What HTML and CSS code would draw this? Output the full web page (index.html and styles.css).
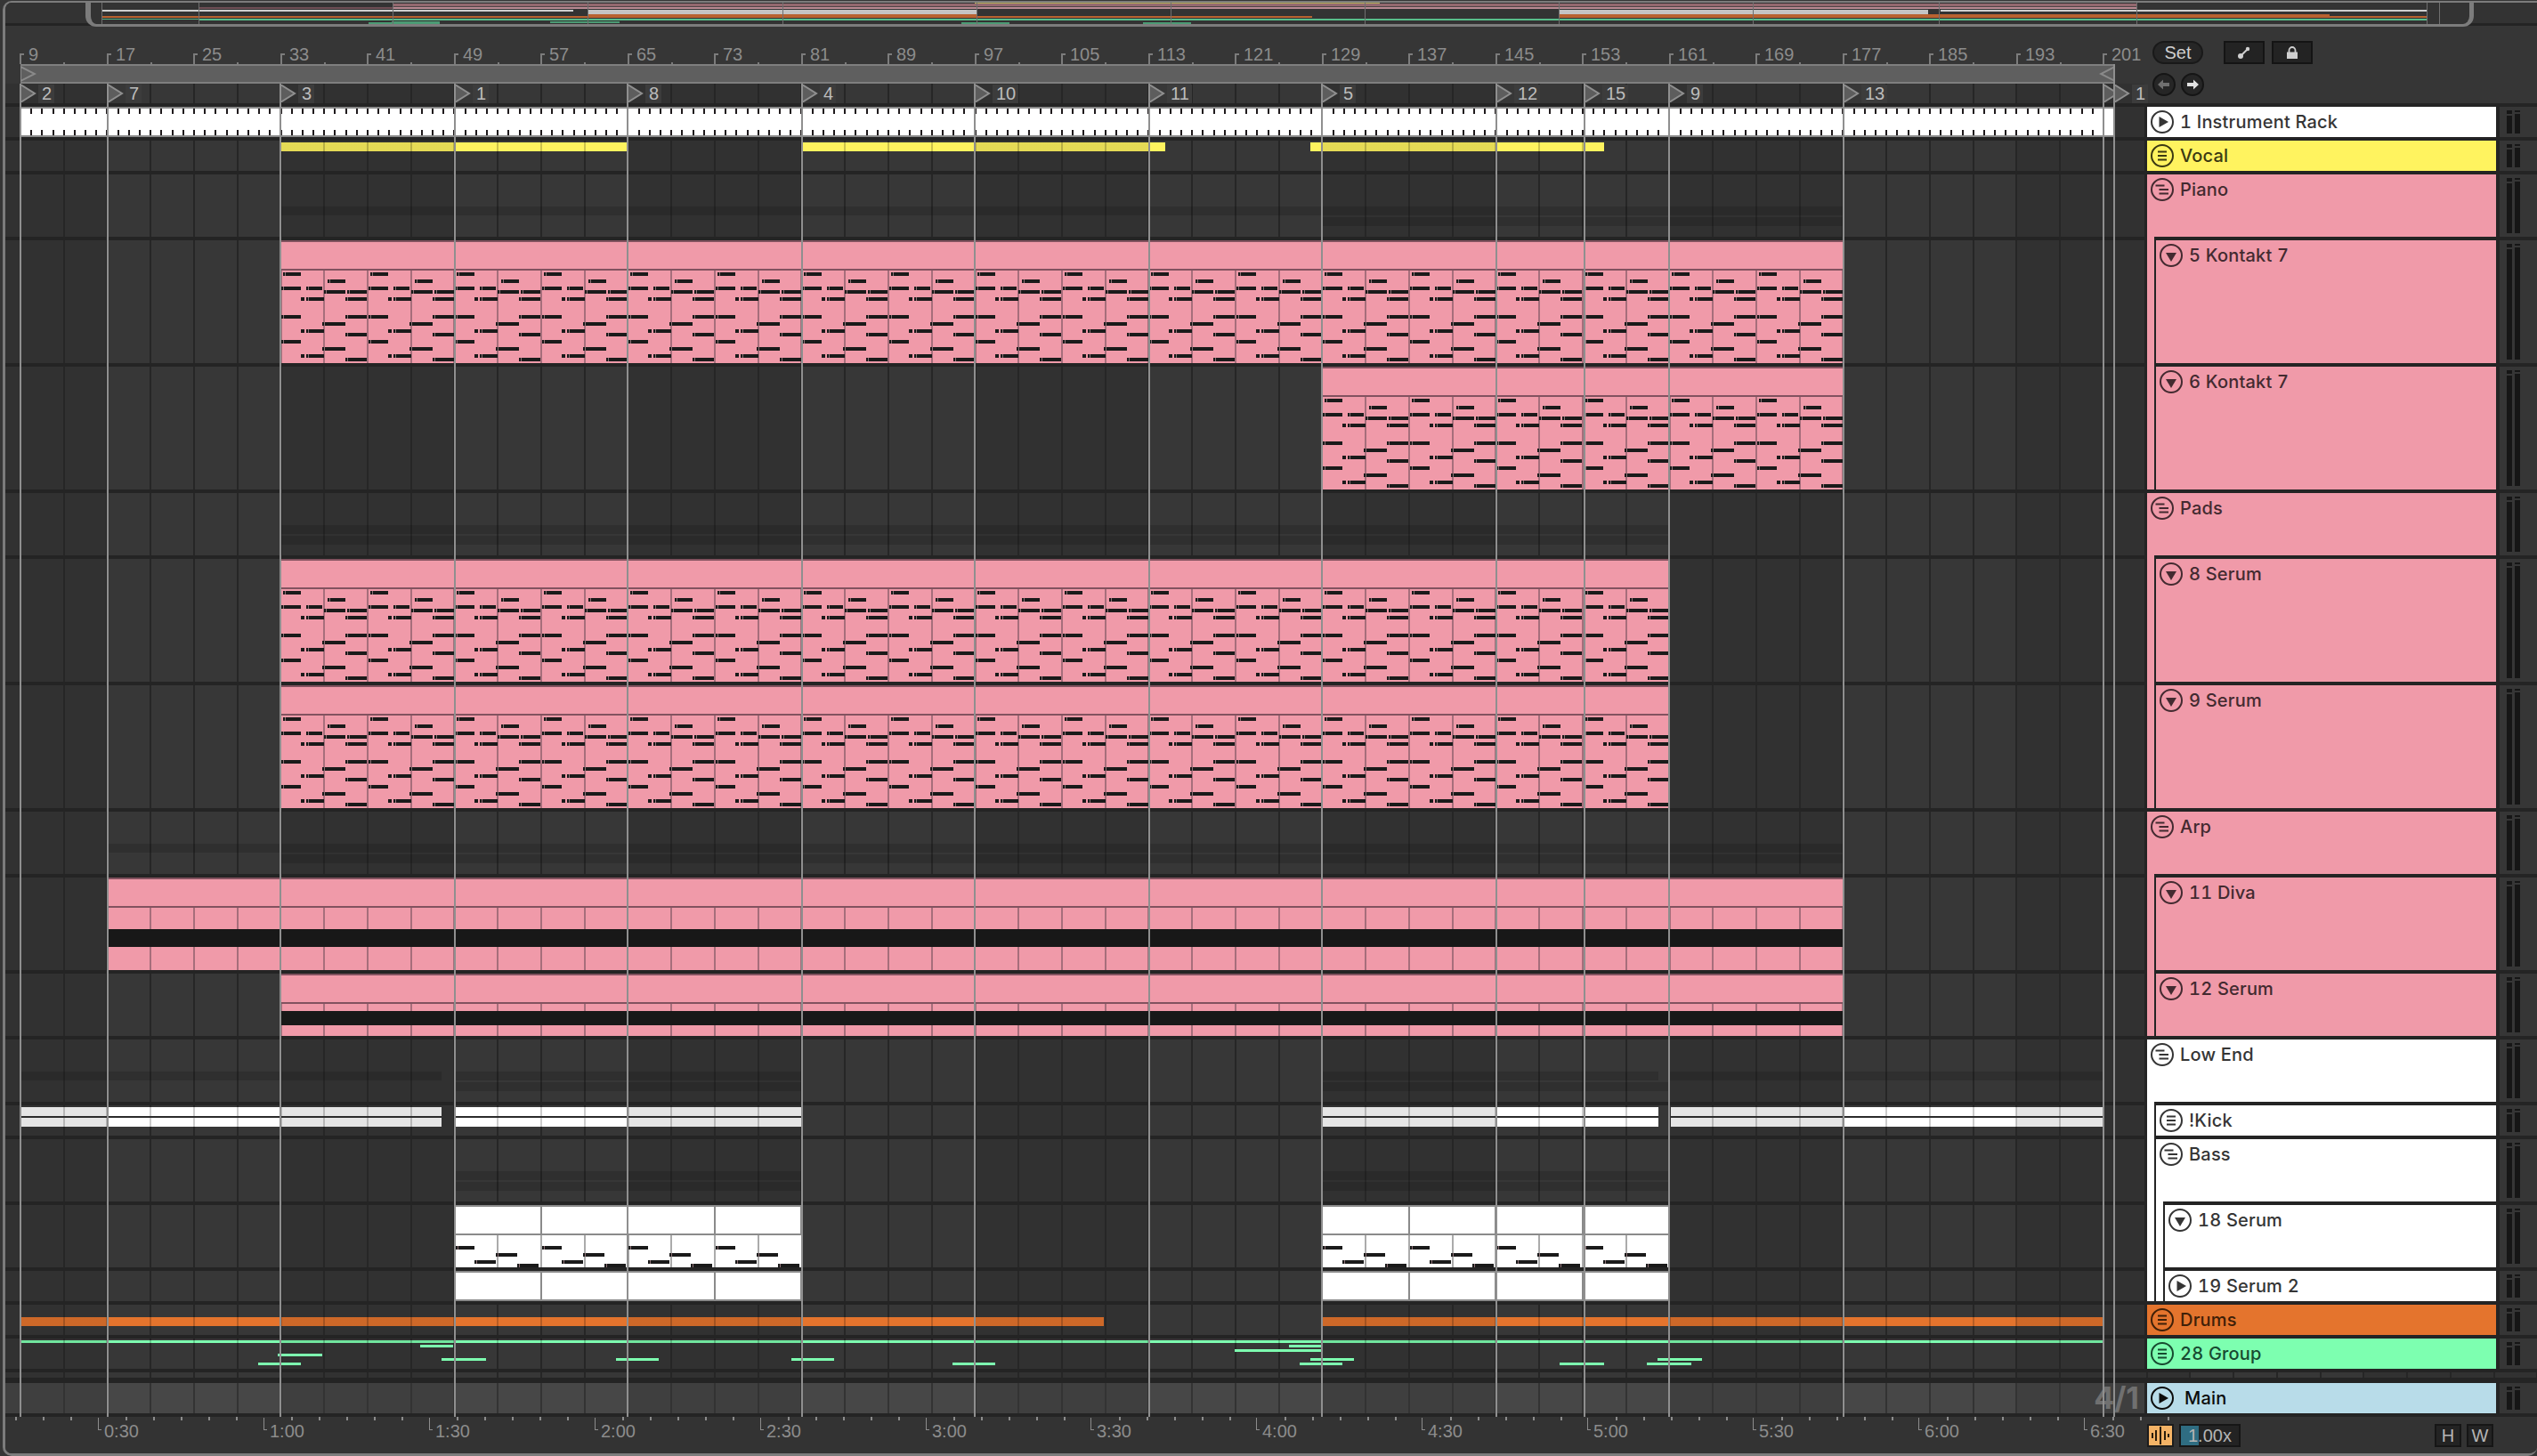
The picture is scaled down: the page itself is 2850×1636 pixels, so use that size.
FILE: index.html
```html
<!DOCTYPE html>
<html lang="en">
<head>
<meta charset="utf-8">
<title>Arrangement</title>
<link rel="stylesheet" href="styles.css">
</head>
<body>
<svg class="defs" width="0" height="0">
  <symbol id="play" viewBox="0 0 26 26"><circle cx="13" cy="13" r="12" fill="none" stroke="currentColor" stroke-width="2"/><polygon points="9.5,7 9.5,19 20,13" fill="currentColor"/></symbol>
  <symbol id="down" viewBox="0 0 26 26"><circle cx="13" cy="13" r="12" fill="none" stroke="currentColor" stroke-width="2"/><polygon points="7,10 19,10 13,20" fill="currentColor"/></symbol>
  <symbol id="lines" viewBox="0 0 26 26"><circle cx="13" cy="13" r="12" fill="none" stroke="currentColor" stroke-width="2"/><path d="M8 8.5h10M8 13h10M8 17.500h10" stroke="currentColor" stroke-width="2" fill="none"/></symbol>
  <symbol id="group" viewBox="0 0 26 26"><circle cx="13" cy="13" r="12" fill="none" stroke="currentColor" stroke-width="2"/><path d="M5.500 8.500h10M9.500 13h10.500M9.500 17.500h10.500" stroke="currentColor" stroke-width="2" fill="none"/></symbol>
</svg>

<div class="app">
  <div class="overview">
    <div class="ov-frame">
      <svg class="ov-map" id="ovmap" width="2671" height="24" viewBox="102 3 2671 24" shape-rendering="crispEdges">
        <rect x="223" y="8" width="218" height="2" fill="#6e4f55"/>
        <rect x="441" y="4" width="1959" height="3" fill="#94696f"/>
        <rect x="441" y="7" width="1959" height="1" fill="#4d4446"/>
        <rect x="441" y="8" width="1959" height="2" fill="#b98a93"/>
        <rect x="1095" y="3" width="455" height="1" fill="#b3ac57"/>
        <rect x="114" y="11" width="530" height="2" fill="#cfcfcf"/>
        <rect x="660" y="11" width="437" height="5" fill="#c4c4c4"/>
        <rect x="1751" y="11" width="415" height="5" fill="#c4c4c4"/>
        <rect x="2180" y="11" width="546" height="2" fill="#cfcfcf"/>
        <rect x="114" y="18" width="1360" height="2" fill="#b86230"/>
        <rect x="660" y="16" width="437" height="4" fill="#b86230"/>
        <rect x="1751" y="16" width="866" height="4" fill="#b86230"/>
        <rect x="2617" y="18" width="109" height="2" fill="#b86230"/>
        <rect x="114" y="21" width="109" height="1" fill="#56b084"/>
        <rect x="223" y="21" width="2503" height="2" fill="#58bd8a"/>
        <rect x="414" y="25" width="54" height="2" fill="#4b9b74"/>
        <rect x="440" y="24" width="54" height="3" fill="#4b9b74"/>
        <rect x="618" y="24" width="78" height="2" fill="#4b9b74"/>
        <rect x="1080" y="25" width="54" height="2" fill="#4b9b74"/>
        <rect x="1284" y="25" width="54" height="2" fill="#4b9b74"/>
      </svg>
    </div>
  </div>

  <div class="arr">
    <div class="top">
      <div class="top-lane">
        <div class="ruler" id="ruler"></div>
        <div class="scrub">
          <svg class="flag flag-l" width="18" height="18" viewBox="0 0 18 18"><polygon points="0,1 16,9 0,17" fill="#5f5f5f" stroke="#8a8a8a" stroke-width="2"/></svg>
          <svg class="flag flag-r" width="18" height="18" viewBox="0 0 18 18"><polygon points="18,1 2,9 18,17" fill="#5f5f5f" stroke="#8a8a8a" stroke-width="2"/></svg>
        </div>
        <div class="locs lanebg" id="locs"></div>
      </div>
      <div class="ctrl">
        <div class="ctrl-row">
          <button class="pill">Set</button>
          <button class="sq sq1"><svg width="16" height="16" viewBox="0 0 16 16"><path d="M4 12L12 4" stroke="#cfcfcf" stroke-width="2"/><circle cx="4" cy="12" r="3" fill="#cfcfcf"/><circle cx="12" cy="4" r="2.200" fill="#cfcfcf"/></svg></button>
          <button class="sq"><svg width="16" height="16" viewBox="0 0 16 16"><path d="M4.500 8V5.500a3.500 3.500 0 0 1 7 0V8" fill="none" stroke="#cfcfcf" stroke-width="1.800"/><rect x="2" y="7.500" width="12" height="7.500" fill="#cfcfcf"/></svg></button>
        </div>
        <div class="ctrl-row ctrl-nav">
          <button class="nav"><svg width="16" height="14" viewBox="0 0 16 14"><path d="M1 7L7 1.500V5H14V9H7V12.500Z" fill="#6f6f6f"/></svg></button>
          <button class="nav"><svg width="16" height="14" viewBox="0 0 16 14"><path d="M15 7L9 1.500V5H2V9H9V12.500Z" fill="#e2e2e2"/></svg></button>
        </div>
      </div>
    </div>

    <div class="rows">
      <div class="row h34 white">
        <div class="lane"><div class="clip rack" style="--x:18px;--w:2351px"></div></div>
        <div class="head"><div class="body"><svg class="ico"><use href="#play"/></svg><span class="name">1 Instrument Rack</span></div></div>
        <div class="act"><div class="meter"><i></i><i></i></div></div>
      </div>
      <div class="row h34 yellow">
        <div class="lane">
          <div class="clip thin t-vocal" style="--x:310px;--w:389px"></div>
          <div class="clip thin t-vocal" style="--x:896px;--w:407px"></div>
          <div class="clip thin t-vocal" style="--x:1466px;--w:330px"></div>
        </div>
        <div class="head"><div class="body"><svg class="ico"><use href="#lines"/></svg><span class="name">Vocal</span></div></div>
        <div class="act"><div class="meter"><i></i><i></i></div></div>
      </div>
      <div class="row h70 pink">
        <div class="lane">
          <div class="ghost" style="--x:309px;--w:1755px"></div>
          <div class="ghost g2" style="--x:1479px;--w:585px"></div>
        </div>
        <div class="head"><div class="body"><svg class="ico"><use href="#group"/></svg><span class="name">Piano</span></div></div>
        <div class="act"><div class="meter"><i></i><i></i></div></div>
      </div>
      <div class="row h138 pink">
        <div class="lane">
          <div class="clip midi" style="--x:310px;--w:1754px"><div class="t"></div><div class="b" data-notes="a"></div></div>
        </div>
        <div class="head"><div class="strip pink"></div><div class="body"><svg class="ico"><use href="#down"/></svg><span class="name">5 Kontakt 7</span></div></div>
        <div class="act"><div class="meter"><i></i><i></i></div></div>
      </div>
      <div class="row h138 pink">
        <div class="lane">
          <div class="clip midi" style="--x:1480px;--w:584px"><div class="t"></div><div class="b" data-notes="a"></div></div>
        </div>
        <div class="head"><div class="strip pink"></div><div class="body"><svg class="ico"><use href="#down"/></svg><span class="name">6 Kontakt 7</span></div></div>
        <div class="act"><div class="meter"><i></i><i></i></div></div>
      </div>
      <div class="row h70 pink">
        <div class="lane">
          <div class="ghost" style="--x:309px;--w:1560px"></div>
          <div class="ghost g2" style="--x:309px;--w:1560px"></div>
        </div>
        <div class="head"><div class="body"><svg class="ico"><use href="#group"/></svg><span class="name">Pads</span></div></div>
        <div class="act"><div class="meter"><i></i><i></i></div></div>
      </div>
      <div class="row h138 pink">
        <div class="lane">
          <div class="clip midi" style="--x:310px;--w:1559px"><div class="t"></div><div class="b" data-notes="a"></div></div>
        </div>
        <div class="head"><div class="strip pink"></div><div class="body"><svg class="ico"><use href="#down"/></svg><span class="name">8 Serum</span></div></div>
        <div class="act"><div class="meter"><i></i><i></i></div></div>
      </div>
      <div class="row h138 pink">
        <div class="lane">
          <div class="clip midi" style="--x:310px;--w:1559px"><div class="t"></div><div class="b" data-notes="a"></div></div>
        </div>
        <div class="head"><div class="strip pink"></div><div class="body"><svg class="ico"><use href="#down"/></svg><span class="name">9 Serum</span></div></div>
        <div class="act"><div class="meter"><i></i><i></i></div></div>
      </div>
      <div class="row h70 pink">
        <div class="lane">
          <div class="ghost" style="--x:115px;--w:1949px"></div>
          <div class="ghost g2" style="--x:309px;--w:1755px"></div>
        </div>
        <div class="head"><div class="body"><svg class="ico"><use href="#group"/></svg><span class="name">Arp</span></div></div>
        <div class="act"><div class="meter"><i></i><i></i></div></div>
      </div>
      <div class="row h104 pink">
        <div class="lane">
          <div class="clip midi" style="--x:116px;--w:1948px"><div class="t"></div><div class="b"><div class="sus sus-a"></div></div></div>
        </div>
        <div class="head"><div class="strip pink"></div><div class="body"><svg class="ico"><use href="#down"/></svg><span class="name">11 Diva</span></div></div>
        <div class="act"><div class="meter"><i></i><i></i></div></div>
      </div>
      <div class="row h70 pink">
        <div class="lane">
          <div class="clip midi" style="--x:310px;--w:1754px"><div class="t"></div><div class="b"><div class="sus sus-b"></div></div></div>
        </div>
        <div class="head"><div class="strip pink"></div><div class="body"><svg class="ico"><use href="#down"/></svg><span class="name">12 Serum</span></div></div>
        <div class="act"><div class="meter"><i></i><i></i></div></div>
      </div>
      <div class="row h70 white">
        <div class="lane">
          <div class="ghost" style="--x:17px;--w:473px"></div>
          <div class="ghost" style="--x:505px;--w:390px"></div>
          <div class="ghost" style="--x:1479px;--w:378px"></div>
          <div class="ghost" style="--x:1870px;--w:486px"></div>
          <div class="ghost g2" style="--x:505px;--w:390px"></div>
          <div class="ghost g2" style="--x:1479px;--w:390px"></div>
        </div>
        <div class="head"><div class="body"><svg class="ico"><use href="#group"/></svg><span class="name">Low End</span></div></div>
        <div class="act"><div class="meter"><i></i><i></i></div></div>
      </div>
      <div class="row h34 white">
        <div class="lane">
          <div class="clip thin t-kick" style="--x:18px;--w:472px"></div>
          <div class="clip thin t-kick" style="--x:506px;--w:389px"></div>
          <div class="clip thin t-kick" style="--x:1480px;--w:377px"></div>
          <div class="clip thin t-kick" style="--x:1871px;--w:485px"></div>
        </div>
        <div class="head"><div class="strip white"></div><div class="body"><svg class="ico"><use href="#lines"/></svg><span class="name">!Kick</span></div></div>
        <div class="act"><div class="meter"><i></i><i></i></div></div>
      </div>
      <div class="row h70 white">
        <div class="lane">
          <div class="ghost" style="--x:505px;--w:390px"></div>
          <div class="ghost g2" style="--x:505px;--w:390px"></div>
          <div class="ghost" style="--x:1479px;--w:390px"></div>
          <div class="ghost g2" style="--x:1479px;--w:390px"></div>
        </div>
        <div class="head"><div class="strip white"></div><div class="body"><svg class="ico"><use href="#group"/></svg><span class="name">Bass</span></div></div>
        <div class="act"><div class="meter"><i></i><i></i></div></div>
      </div>
      <div class="row h70 white">
        <div class="lane">
          <div class="clip midi wclip" style="--x:506px;--w:389px"><div class="t"></div><div class="b" data-notes="b"></div></div>
          <div class="clip midi wclip" style="--x:1480px;--w:389px"><div class="t"></div><div class="b" data-notes="b"></div></div>
        </div>
        <div class="head"><div class="strip white"></div><div class="strip white"></div><div class="body"><svg class="ico"><use href="#down"/></svg><span class="name">18 Serum</span></div></div>
        <div class="act"><div class="meter"><i></i><i></i></div></div>
      </div>
      <div class="row h34 white">
        <div class="lane">
          <div class="clip midi wclip short" style="--x:506px;--w:389px"><div class="t"></div></div>
          <div class="clip midi wclip short" style="--x:1480px;--w:389px"><div class="t"></div></div>
        </div>
        <div class="head"><div class="strip white"></div><div class="strip white"></div><div class="body"><svg class="ico"><use href="#play"/></svg><span class="name">19 Serum 2</span></div></div>
        <div class="act"><div class="meter"><i></i><i></i></div></div>
      </div>
      <div class="row h34 orange">
        <div class="lane">
          <div class="clip thin t-drums" style="--x:17px;--w:1217px"></div>
          <div class="clip thin t-drums" style="--x:1480px;--w:876px"></div>
        </div>
        <div class="head"><div class="body"><svg class="ico"><use href="#lines"/></svg><span class="name">Drums</span></div></div>
        <div class="act"><div class="meter"><i></i><i></i></div></div>
      </div>
      <div class="row h34 green">
        <div class="lane">
          <div class="clip thin t-group" style="--x:17px;--w:2339px"></div>
          <i class="gn" style="--x:466px;--y:7px;--w:37px"></i>
          <i class="gn" style="--x:306px;--y:17px;--w:50px"></i>
          <i class="gn" style="--x:490px;--y:22px;--w:50px"></i>
          <i class="gn" style="--x:284px;--y:27px;--w:48px"></i>
          <i class="gn" style="--x:686px;--y:22px;--w:48px"></i>
          <i class="gn" style="--x:883px;--y:22px;--w:48px"></i>
          <i class="gn" style="--x:1064px;--y:27px;--w:48px"></i>
          <i class="gn" style="--x:1442px;--y:7px;--w:36px"></i>
          <i class="gn" style="--x:1381px;--y:12px;--w:97px"></i>
          <i class="gn" style="--x:1466px;--y:22px;--w:49px"></i>
          <i class="gn" style="--x:1454px;--y:27px;--w:48px"></i>
          <i class="gn" style="--x:1746px;--y:27px;--w:50px"></i>
          <i class="gn" style="--x:1856px;--y:22px;--w:50px"></i>
          <i class="gn" style="--x:1844px;--y:27px;--w:50px"></i>
        </div>
        <div class="head"><div class="body"><svg class="ico"><use href="#lines"/></svg><span class="name">28 Group</span></div></div>
        <div class="act"><div class="meter"><i></i><i></i></div></div>
      </div>
      <div class="mini"><div class="lane"></div></div>
      <div class="row h34 blue main">
        <div class="lane lane-main"><span class="sig">4/1</span></div>
        <div class="head"><div class="body"><svg class="ico"><use href="#play"/></svg><span class="name">Main</span></div></div>
        <div class="act"><div class="meter"><i></i><i></i></div></div>
      </div>
    </div>
    <div class="lines" id="lines-layer"></div>
  </div>

  <div class="foot">
    <div class="time" id="time"></div>
    <div class="foot-tools">
      <button class="wave"><svg width="22" height="20" viewBox="0 0 22 20"><path d="M2 7v6M6 4v12M11 0v20M16 5v10M20 8v4" stroke="#2a1d0c" stroke-width="2" fill="none"/></svg></button>
      <div class="rate"><span class="rate-fill"></span><span class="rate-text">1.00x</span></div>
      <div class="spacer"></div>
      <button class="hw">H</button>
      <button class="hw">W</button>
    </div>
  </div>
</div>
<script src="script.js"></script>
</body>
</html>
```
FILE: styles.css
```css
* { box-sizing: border-box; }
html, body { margin: 0; padding: 0; background: #363636; overflow: hidden; }
body { width: 2850px; height: 1636px; font-family: "Liberation Sans", Arial, sans-serif; }
.defs { position: absolute; }
button { font: inherit; padding: 0; display: flex; align-items: center; justify-content: center; }

.white { --c: #ffffff; --ink: #353535; }
.yellow { --c: #fff35f; --ink: #3b3912; }
.pink { --c: #f09aa9; --ink: #432a30; }
.orange { --c: #e4742d; --ink: #3f2008; }
.green { --c: #7dffb0; --ink: #174a30; }
.blue { --c: #b8dce9; --ink: #0c0c0c; }

.app {
  width: 2847px; height: 1635px; margin: 1px 0 0 3px;
  border: 0 solid #7c7c7c; border-width: 2px 0 3px 3px;
  border-radius: 10px 0 10px 10px;
  background: #363636;
  display: flex; flex-direction: column; overflow: hidden;
}

/* Overview */
.overview {
  height: 27px; padding: 0 71px 0 90px;
  background: linear-gradient(#333 0 23px, #242424 23px 26px, #363636 26px);
}
.ov-frame {
  height: 27px; background: #333;
  border: 0 solid #7c7c7c; border-width: 0 5px 3px 6px;
  border-radius: 0 0 12px 12px;
  overflow: hidden;
}
.ov-map { display: block; }

/* Top */
.arr { position: relative; }
.top { display: flex; height: 86px; }
.top-lane { width: 2403px; display: flex; flex-direction: column; }
.ruler { position: relative; height: 42px; }
.r-num { position: absolute; top: 20px; margin-left: 10px; font-size: 20px; line-height: 22px; color: #8c8c8c; }
.r8 { position: absolute; top: 30px; height: 12px; width: 5px; border-left: 2px solid #7c7c7c; border-top: 2px solid #7c7c7c; }
.r4 { position: absolute; top: 40px; height: 2px; width: 2px; background: #7c7c7c; }
.scrub {
  position: relative; height: 22px; width: 2353px; margin-left: 17px;
  background: #5f5f5f; border-top: 2px solid #7f7f7f; border-bottom: 2px solid #7f7f7f;
}
.flag { position: absolute; top: 0; display: block; }
.flag-l { left: 0; }
.flag-r { right: 0; }
.locs { position: relative; height: 22px; }
.lanebg, .lane {
  background:
    repeating-linear-gradient(90deg, #262626 16px, #262626 18px, transparent 18px, transparent 64.75px),
    repeating-linear-gradient(90deg, #373737 114px, #373737 309px, #313131 309px, #313131 504px);
}
.loc { position: absolute; top: 1px; left: var(--x); width: 40px; height: 20px; }
.loc svg { display: block; }
.loc b {
  position: absolute; left: 21px; top: 0; padding: 0 3px 0 4px; min-width: 17px;
  background: #3c3c3c; color: #bdbdbd; font-weight: 400; font-size: 20px; line-height: 21px;
}
.ctrl { flex: 1; padding: 16px 0 0 9px; background: #363636; }
.ctrl-row { display: flex; height: 26px; }
.ctrl-nav { margin-top: 10px; gap: 6px; }
.pill {
  width: 57px; height: 26px; border-radius: 13px; border: 2px solid #191919;
  background: #262626; color: #cfcfcf; font-size: 20px; margin-right: 23px;
}
.sq { width: 46px; height: 26px; border: 2px solid #141414; background: #232323; margin-right: 8px; }
.nav { width: 26px; height: 26px; border-radius: 50%; border: 2px solid #151515; background: #262626; }

/* Rows */
.rows { background: #242424; padding: 4px 0; display: flex; flex-direction: column; gap: 4px; }
.row { display: flex; }
.h34 { height: 34px; }
.h70 { height: 70px; }
.h104 { height: 104px; }
.h138 { height: 138px; }
.lane { position: relative; width: 2403px; flex: none; }
.head {
  display: flex; width: 392px; flex: none; margin: 0 4px 0 3px;
  color: var(--ink);
}
.strip { width: 10px; flex: none; margin-top: -4px; background: var(--c); border-right: 2px solid #242424; }
.body { flex: 1; min-width: 0; display: flex; align-items: flex-start; padding: 4px 0 0 4px; gap: 7px; background: var(--c); overflow: hidden; }
.ico { width: 26px; height: 26px; flex: none; display: block; }
.name { font-family: Inter, "Liberation Sans", sans-serif; font-size: 20px; font-weight: 500; line-height: 26px; letter-spacing: .2px; font-variant-numeric: tabular-nums; white-space: nowrap; }
.main .body { gap: 12px; }
.act { flex: 1; background: #363636; padding: 4px 0 4px 8px; }
.meter { display: flex; gap: 3px; height: 100%; }
.meter i {
  display: block; width: 6px; height: 100%;
  background: linear-gradient(#161616 0 4px, transparent 4px 6px, #161616 6px);
}
.meter i + i { background: linear-gradient(#161616 0 2px, transparent 2px 4px, #161616 4px); }

.mini { height: 6px; margin-bottom: 2px; display: flex; }
.mini .lane { height: 6px; width: 100%; background-color: #333; }
.lane-main {
  background:
    repeating-linear-gradient(90deg, #333 16px, #333 18px, transparent 18px, transparent 64.75px),
    repeating-linear-gradient(90deg, #474747 114px, #474747 309px, #3f3f3f 309px, #3f3f3f 504px);
}
.sig {
  position: absolute; right: 6px; top: -2px;
  font-family: Inter, "Liberation Sans", sans-serif; font-weight: 700; font-size: 34px; line-height: 38px;
  color: #707070;
}

/* Clips */
.clip { position: absolute; left: var(--x); width: var(--w); top: 0; bottom: 0; display: flex; flex-direction: column; }
.ghost { position: absolute; left: var(--x); width: var(--w); top: 36px; height: 10px; background: rgba(0, 0, 0, .13); }
.g2 { top: 48px; }
.midi { --c: #f09aa9; --edge: #82525f; --line: #a66e7b; }
.wclip { --c: #ffffff; --edge: #8a8a8a; --line: #ababab; }
.midi .t { height: 34px; flex: none; background-color: var(--c); border-top: 2px solid var(--edge); border-bottom: 2px solid var(--edge); }
.wclip .t {
  background-image: repeating-linear-gradient(90deg, #8a8a8a calc(16px - var(--x)), #8a8a8a calc(18px - var(--x)), transparent calc(18px - var(--x)), transparent calc(113.5px - var(--x)));
}
.midi .b {
  position: relative; flex: 1; min-height: 0; background-color: var(--c);
  background-image: repeating-linear-gradient(90deg, var(--line) calc(16px - var(--x)), var(--line) calc(18px - var(--x)), transparent calc(18px - var(--x)), transparent calc(64.75px - var(--x)));
}
.short .t { height: 34px; }
.sus { position: absolute; left: 0; right: 0; background: #181818; }
.sus-a { top: 24px; height: 20px; }
.sus-b { top: 8px; height: 16px; }
.notes { position: absolute; left: 0; top: 0; display: block; }
.rack {
  background-color: #fff;
  background-image:
    repeating-linear-gradient(90deg, #1f1a1c 10.1875px, #1f1a1c 12.1875px, transparent 12.1875px, transparent 22.375px),
    repeating-linear-gradient(90deg, #1f1a1c 10.1875px, #1f1a1c 12.1875px, transparent 12.1875px, transparent 22.375px);
  background-size: 100% 6px;
  background-position: 0 2px, 0 26px;
  background-repeat: no-repeat;
  border-top: 2px solid #8a8a8a; border-bottom: 2px solid #8a8a8a;
  background-origin: border-box;
}
.thin {
  background-color: var(--c);
  background-image:
    repeating-linear-gradient(90deg, rgba(0,0,0,.2) calc(16px - var(--x)), rgba(0,0,0,.2) calc(18px - var(--x)), transparent calc(18px - var(--x)), transparent calc(64.75px - var(--x))),
    repeating-linear-gradient(90deg, transparent calc(114px - var(--x)), transparent calc(309px - var(--x)), rgba(0,0,0,.1) calc(309px - var(--x)), rgba(0,0,0,.1) calc(504px - var(--x)));
}
.t-vocal { top: 2px; bottom: auto; height: 10px; }
.t-drums { top: 14px; bottom: auto; height: 10px; }
.t-group { top: 2px; bottom: auto; height: 3px; }
.t-kick { top: 2px; bottom: auto; height: 22px; }
.t-kick::after { content: ""; position: absolute; left: 0; right: 0; top: 10px; height: 2px; background: #2b2b2b; }
.gn { position: absolute; display: block; left: var(--x); top: var(--y); width: var(--w); height: 3px; background: #7dffb0; }

/* Locator lines over everything */
.lines { position: absolute; left: 0; top: 64px; bottom: 0; width: 2403px; pointer-events: none; }
.lines i { position: absolute; left: var(--x); top: 0; bottom: 0; width: 2px; background: #8f8f8f; }
.lines i.end { top: -22px; }

/* Footer */
.foot { flex: 1; display: flex; background: #333; min-height: 0; }
.time { position: relative; width: 2406px; flex: none; }
.t-tick { position: absolute; left: var(--x); top: 0; width: 1.5px; height: 4px; background: #8c8c8c; }
.t-big { position: absolute; left: var(--x); top: 1px; width: 4px; height: 14px; border-left: 1.500px solid #8c8c8c; border-bottom: 1.500px solid #8c8c8c; }
.t-num { position: absolute; left: var(--x); margin-left: 7px; top: 5px; font-size: 20px; line-height: 22px; color: #8c8c8c; }
.foot-tools { flex: 1; display: flex; align-items: flex-start; padding-top: 8px; }
.wave { width: 30px; height: 26px; background: #f4b366; border: 2px solid #1c1c1c; }
.rate { position: relative; width: 69px; height: 26px; margin-left: 6px; background: #232323; border: 2px solid #161616; }
.rate-fill { position: absolute; left: 0; top: 0; bottom: 0; width: 20px; background: #2f6d82; }
.rate-text { position: absolute; left: 8px; top: 0; font-size: 20px; line-height: 22px; color: #b5b5b5; }
.spacer { flex: 1; }
.hw { width: 30px; height: 26px; background: #232323; border: 2px solid #161616; color: #b5b5b5; font-size: 20px; margin-right: 6px; }
.hw + .hw { margin-right: 49px; }
```
FILE: script.js
```js
// Positions are in lane pixels: the lane starts at x = 6 on the page.
var STEP8 = 97.5;
var GRID0 = 16;

function el(parent, cls, x, text) {
  var n = document.createElement(text === undefined ? 'i' : 'span');
  n.className = cls;
  n.style.setProperty('--x', x + 'px');
  if (text !== undefined) n.textContent = text;
  parent.appendChild(n);
  return n;
}

// Bar ruler
var ruler = document.getElementById('ruler');
for (var bar = 9; bar <= 201; bar += 8) {
  var x = Math.round(GRID0 + (bar - 9) * 12.1875);
  var t = el(ruler, 'r8', 0); t.style.left = x + 'px';
  var s = el(ruler, 'r-num', 0, String(bar)); s.style.left = x + 'px';
  if (bar < 201) { var m = el(ruler, 'r4', 0); m.style.left = Math.round(x + STEP8 / 2) + 'px'; }
}

// Locators
var LOCS = [[16,'2'],[114,'7'],[308,'3'],[504,'1'],[698,'8'],[894,'4'],[1088,'10'],[1284,'11'],[1478,'5'],[1674,'12'],[1773,'15'],[1868,'9'],[2064,'13'],[2356,''],[2368,'1']];
var locs = document.getElementById('locs');
var layer = document.getElementById('lines-layer');
LOCS.forEach(function (l) {
  var d = document.createElement('div');
  d.className = 'loc';
  d.style.setProperty('--x', l[0] + 'px');
  d.innerHTML = '<svg width="20" height="20" viewBox="0 0 20 20"><polygon points="1,0 17,10 1,20" fill="#5d5d5d" stroke="#8f8f8f" stroke-width="2"/></svg>';
  if (l[1]) { var b = document.createElement('b'); b.textContent = l[1]; d.appendChild(b); }
  locs.appendChild(d);
  el(layer, l[0] === 2368 ? 'end' : '', l[0]);
});

// Notes: [top, start, end] inside one 8-bar tile
var PATTERNS = {
  a: [[2,2,22],[10,52,72],[18,0,22],[18,28,46],[22,48,72],[22,74,96],[30,22,26],[30,28,48],[30,72,96],[50,0,22],[50,72,96],[58,46,72],[66,22,26],[66,28,48],[70,72,96],[78,0,22],[86,46,72],[94,22,26],[94,28,48],[98,72,96]],
  b: [[12,0,22],[20,46,70],[28,22,46],[32,70,94]]
};
var SVGNS = 'http://www.w3.org/2000/svg';
document.querySelectorAll('[data-notes]').forEach(function (b) {
  var clip = b.parentNode;
  var cx = parseFloat(clip.style.getPropertyValue('--x'));
  var cw = parseFloat(clip.style.getPropertyValue('--w'));
  var h = b.dataset.notes === 'a' ? 104 : 36;
  var svg = document.createElementNS(SVGNS, 'svg');
  svg.setAttribute('class', 'notes');
  svg.setAttribute('width', cw);
  svg.setAttribute('height', h);
  svg.setAttribute('shape-rendering', 'crispEdges');
  var k0 = Math.floor((cx - GRID0) / STEP8) - 1;
  for (var k = k0; GRID0 + k * STEP8 < cx + cw; k++) {
    var tile = GRID0 + k * STEP8 + 1.5 - cx;
    PATTERNS[b.dataset.notes].forEach(function (n) {
      var x0 = Math.round(Math.max(0, tile + n[1]));
      var x1 = Math.round(Math.min(cw, tile + n[2]));
      if (x1 <= x0) return;
      var r = document.createElementNS(SVGNS, 'rect');
      r.setAttribute('x', x0); r.setAttribute('y', n[0]);
      r.setAttribute('width', x1 - x0); r.setAttribute('height', 4);
      r.setAttribute('fill', '#1a1a1a');
      svg.appendChild(r);
      if (x1 - x0 > 8) {
        var g = document.createElementNS(SVGNS, 'rect');
        g.setAttribute('x', x0 + 2); g.setAttribute('y', n[0]);
        g.setAttribute('width', 1); g.setAttribute('height', 4);
        g.setAttribute('fill', '#8d7176');
        svg.appendChild(g);
      }
    });
  }
  b.appendChild(svg);
});

// Overview locator lines
var ov = document.getElementById('ovmap');
[114, 223, 441, 660, 879, 1097, 1315, 1533, 1751, 1969, 2178, 2400, 2726, 2740].forEach(function (x) {
  var r = document.createElementNS(SVGNS, 'rect');
  r.setAttribute('x', x); r.setAttribute('y', 3);
  r.setAttribute('width', 1); r.setAttribute('height', 24);
  r.setAttribute('fill', '#6f6f6f');
  ov.appendChild(r);
});

// Time ruler
var time = document.getElementById('time');
for (var i = -3; i < 76; i++) {
  var tx = Math.round(104 + i * 31);
  if (i % 6 === 0) continue;
  el(time, 't-tick', tx);
}
for (var j = 0; j < 13; j++) {
  var total = 30 * (j + 1);
  var label = Math.floor(total / 60) + ':' + (total % 60 === 0 ? '00' : '30');
  var bx = Math.round(104 + j * 185.9);
  el(time, 't-big', bx);
  el(time, 't-num', bx, label);
}
```
